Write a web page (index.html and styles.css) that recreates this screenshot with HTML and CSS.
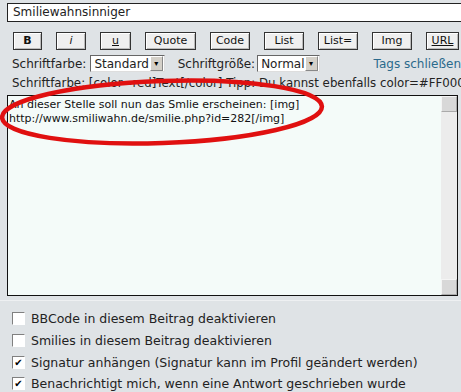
FILE: index.html
```html
<!DOCTYPE html>
<html lang="de">
<head>
    <meta charset="UTF-8">
    <title>Beitrag schreiben</title>
    <link rel="stylesheet" href="styles.css">
</head>
<body>
    <div class="editor">
        <div class="subject">Smiliewahnsinniger</div>

        <div class="toolbar">
            <span class="btn w-b"><b>B</b></span>
            <span class="btn w-i"><i>i</i></span>
            <span class="btn w-u"><u>u</u></span>
            <span class="btn w-quote">Quote</span>
            <span class="btn w-code">Code</span>
            <span class="btn w-list">List</span>
            <span class="btn w-list">List=</span>
            <span class="btn w-list">Img</span>
            <span class="btn w-url"><u>URL</u></span>
        </div>

        <div class="fontrow">
            <span class="lbl">Schriftfarbe:</span>
            <span class="select color">Standard<span class="arrow">&#9662;</span></span>
            <span class="lbl size-lbl">Schriftgröße:</span>
            <span class="select size">Normal<span class="arrow">&#9662;</span></span>
            <a class="close-tags" href="#">Tags schließen</a>
        </div>

        <div class="hint">Schriftfarbe: [color=red]Text[/color] Tipp: Du kannst ebenfalls color=#FF0000 b</div>

        <div class="message">
            <div class="message-text">An dieser Stelle soll nun das Smlie erscheinen: [img]<br>http://www.smiliwahn.de/smilie.php?id=282[/img]</div>
            <div class="scrollbar">
                <span class="sb-btn"></span>
                <span class="sb-btn"></span>
            </div>
        </div>

        <div class="options">
            <label class="opt"><span class="box"></span>BBCode in diesem Beitrag deaktivieren</label>
            <label class="opt"><span class="box"></span>Smilies in diesem Beitrag deaktivieren</label>
            <label class="opt"><span class="box checked">&#10004;</span>Signatur anhängen (Signatur kann im Profil geändert werden)</label>
            <label class="opt"><span class="box checked">&#10004;</span>Benachrichtigt mich, wenn eine Antwort geschrieben wurde</label>
        </div>
    </div>

    <svg class="marker" width="461" height="392" viewBox="0 0 461 392">
        <ellipse cx="162" cy="112" rx="160" ry="31" transform="rotate(-2 162 112)" fill="none" stroke="#e01010" stroke-width="4.5"/>
    </svg>
</body>
</html>
```

FILE: styles.css
```css
body {
    margin: 0;
    background: #dfe3e6;
    font-family: "DejaVu Sans", Verdana, sans-serif;
    font-size: 12px;
    color: #222;
    width: 461px;
    height: 392px;
    overflow: hidden;
}
.editor {
    padding: 3px 0 0 7px;
}
.subject {
    width: 454px;
    height: 17px;
    border: 1px solid #222;
    background: #fff;
    padding-left: 5px;
    line-height: 17px;
    font-size: 12px;
    box-sizing: content-box;
    white-space: nowrap;
}
.toolbar {
    display: flex;
    gap: 14px;
    margin: 10px 0 0 6px;
}
.btn {
    height: 16px;
    line-height: 16px;
    border: 1px solid #333;
    box-shadow: inset 1px 1px 0 #fff, inset -1px -1px 0 #bbb;
    background: #efefef;
    text-align: center;
    font-size: 11px;
    color: #111;
}
.w-b { width: 27px; }
.w-i { width: 28px; }
.w-u { width: 29px; }
.w-quote { width: 49px; }
.w-code { width: 38px; }
.w-list { width: 38px; }
.w-url { width: 31px; }
.fontrow {
    display: flex;
    align-items: center;
    margin: 5px 0 0 5px;
    height: 17px;
}
.lbl {
    font-size: 12px;
}
.select {
    display: inline-flex;
    align-items: center;
    justify-content: space-between;
    height: 15px;
    border: 1px solid #666;
    border-right-color: #ddd;
    border-bottom-color: #ddd;
    background: #fff;
    padding-left: 3px;
    margin-left: 4px;
    font-size: 12px;
}
.select.color { width: 80px; }
.select.size { width: 58px; margin-left: 2px; }
.arrow {
    width: 11px;
    height: 13px;
    margin-right: 1px;
    background: #d4d0c8;
    border: 1px solid #888;
    border-top-color: #fff;
    border-left-color: #fff;
    font-size: 8px;
    line-height: 13px;
    text-align: center;
    color: #000;
}
.size-lbl { margin-left: 13px; }
.close-tags {
    margin-left: 54px;
    color: #2b6a8c;
    text-decoration: none;
    font-size: 12px;
    white-space: nowrap;
}
.hint {
    margin: 3px 0 0 5px;
    font-size: 11.8px;
    white-space: nowrap;
    overflow: hidden;
    height: 16px;
    line-height: 16px;
}
.message {
    display: flex;
    width: 449px;
    height: 199px;
    margin-top: 4px;
    border: 1px solid #111;
    background: #f4fbf9;
}
.message-text {
    flex: 1;
    padding: 2px 0 0 1px;
    font-size: 11px;
    line-height: 14px;
    color: #111;
}
.scrollbar {
    width: 16px;
    background: #ececec;
    display: flex;
    flex-direction: column;
    justify-content: space-between;
}
.sb-btn {
    height: 14px;
    background: #d8d8d8;
    border: 1px solid #f4f4f4;
    border-right-color: #aaa;
    border-bottom-color: #aaa;
}
.options {
    margin: 4px 0 0 -7px;
    padding: 7px 0 0 12px;
    border-top: 1px solid #eef0f2;
}
.opt {
    display: flex;
    align-items: center;
    height: 21.7px;
    font-size: 12.5px;
    color: #222;
    white-space: nowrap;
}
.box {
    width: 11px;
    height: 11px;
    margin-right: 6px;
    border: 1px solid #808080;
    border-right-color: #fff;
    border-bottom-color: #fff;
    background: #fff;
    font-size: 10px;
    line-height: 11px;
    text-align: center;
    color: #000;
}
.marker {
    position: absolute;
    left: 0;
    top: 0;
    pointer-events: none;
}
```
